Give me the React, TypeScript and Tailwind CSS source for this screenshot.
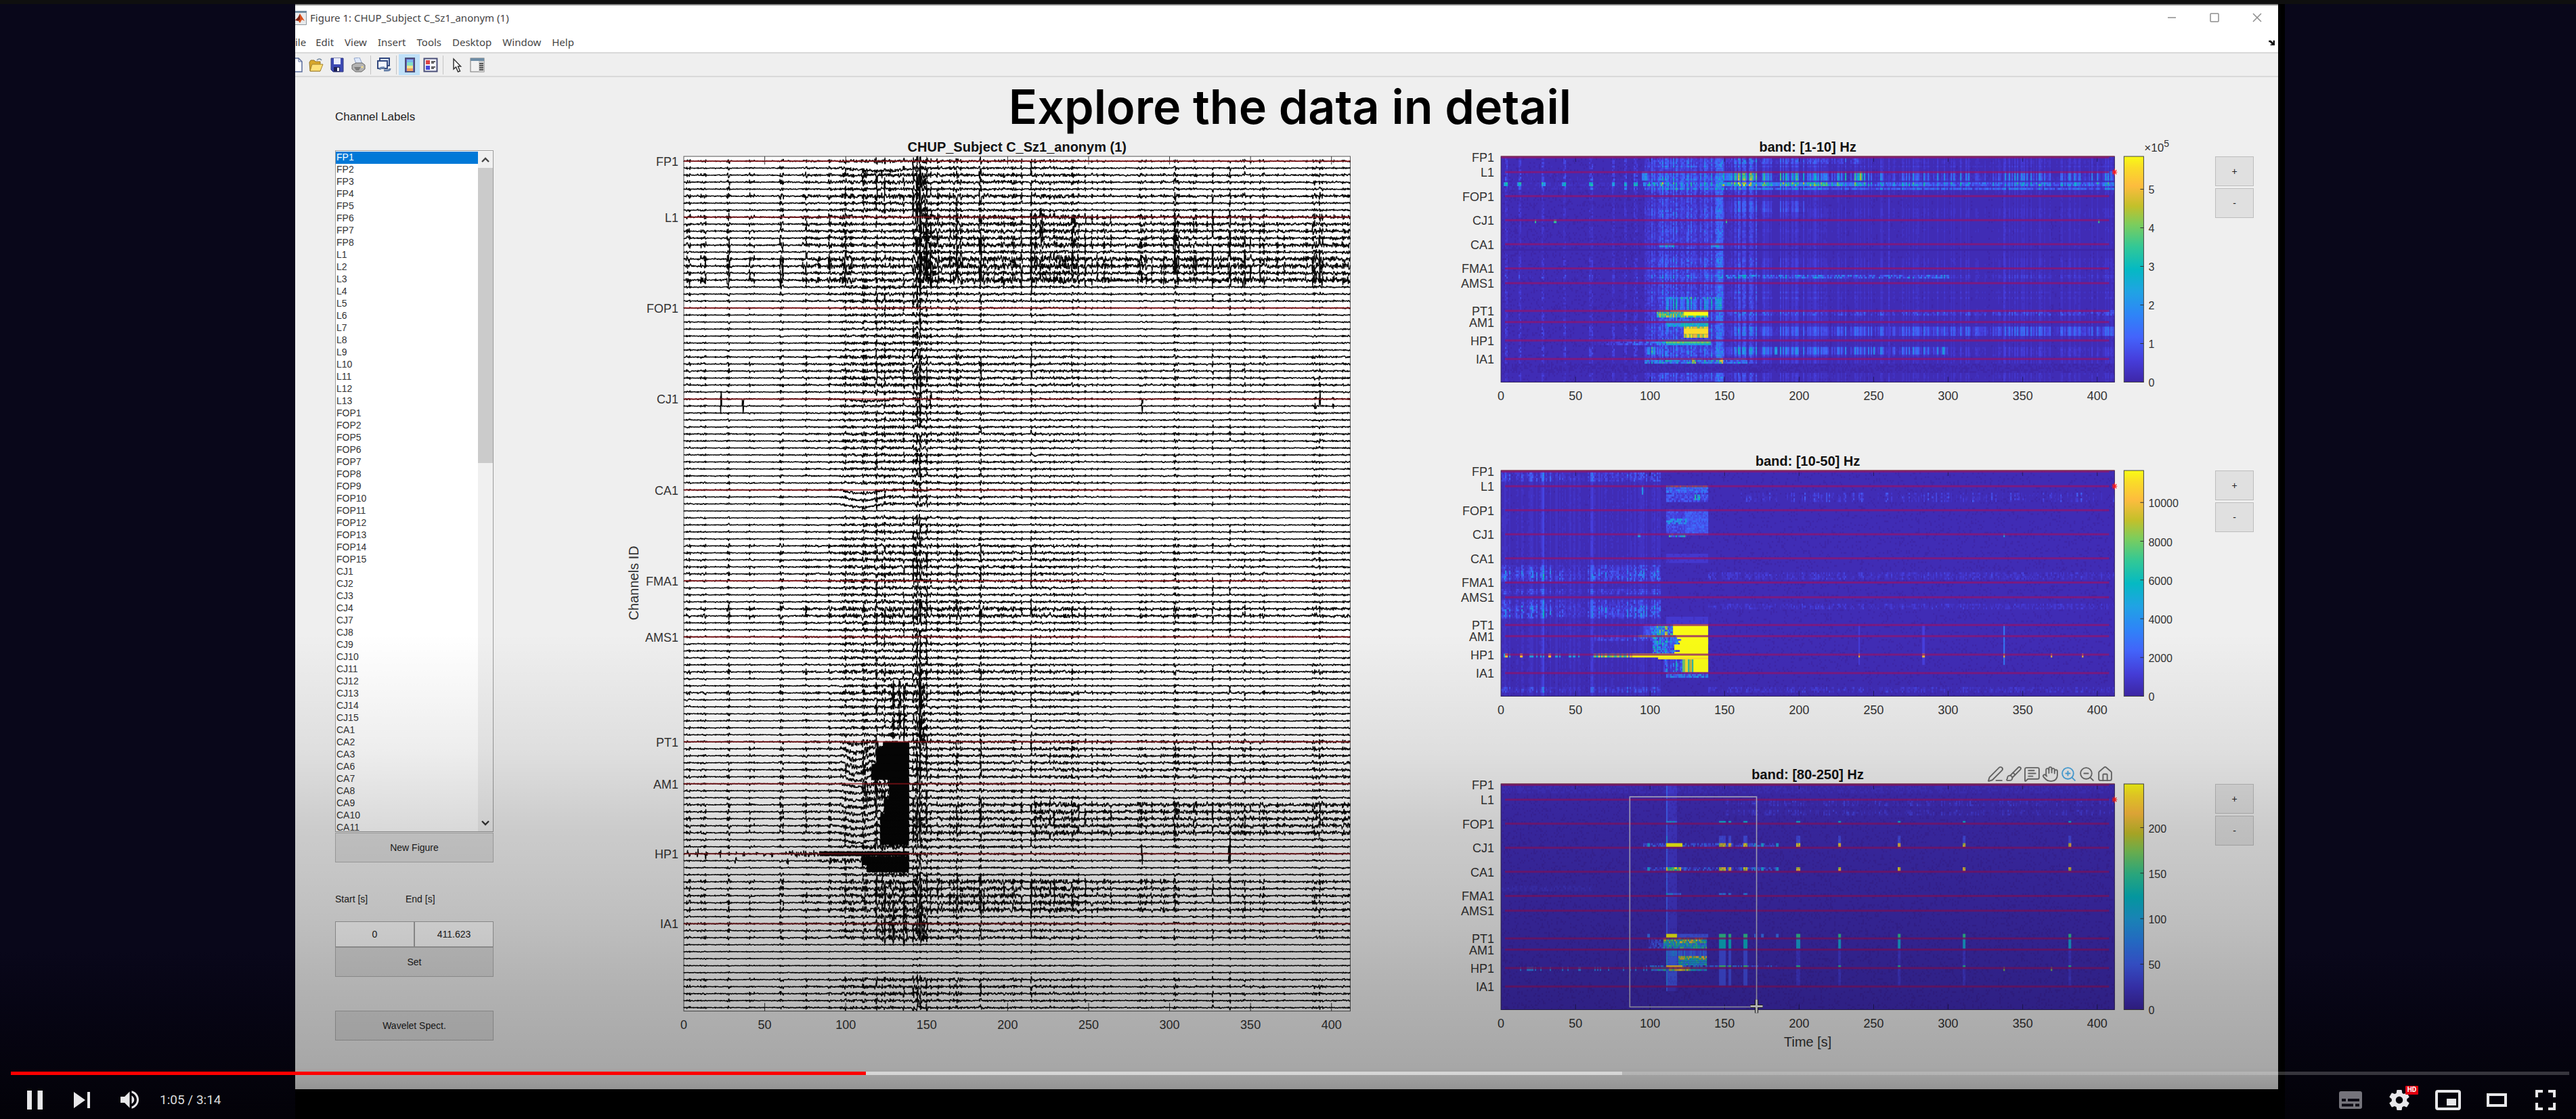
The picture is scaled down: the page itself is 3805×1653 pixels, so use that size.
import { useMemo, type ReactNode } from "react";
import { Brush, Hand, House, MessageSquareText, PenLine, ZoomIn, ZoomOut } from "lucide-react";

const CHANNELS = 122;
const DURATION = 411.6;

const MARKERS: [string, number][] = [
  ["FP1", 0], ["L1", 8], ["FOP1", 21], ["CJ1", 34], ["CA1", 47], ["FMA1", 60],
  ["AMS1", 68], ["PT1", 83], ["AM1", 89], ["HP1", 99], ["IA1", 109],
];

const LIST = (
  "FP1 FP2 FP3 FP4 FP5 FP6 FP7 FP8 L1 L2 L3 L4 L5 L6 L7 L8 L9 L10 L11 L12 L13 " +
  "FOP1 FOP2 FOP5 FOP6 FOP7 FOP8 FOP9 FOP10 FOP11 FOP12 FOP13 FOP14 FOP15 " +
  "CJ1 CJ2 CJ3 CJ4 CJ7 CJ8 CJ9 CJ10 CJ11 CJ12 CJ13 CJ14 CJ15 " +
  "CA1 CA2 CA3 CA6 CA7 CA8 CA9 CA10 CA11"
).split(" ");

const TIME_TICKS = [0, 50, 100, 150, 200, 250, 300, 350, 400];

/* Repeatable noise in 0..1 */
function noise(a: number, b: number) {
  const s = Math.sin(a * 127.1 + b * 311.7 + 13.7) * 43758.5453;
  return s - Math.floor(s);
}
const within = (v: number, lo: number, hi: number) => v >= lo && v <= hi;
const near = (t: number, list: number[], w: number) => list.some((x) => Math.abs(t - x) <= w);

/* ---------- multichannel traces ---------- */

const EARLY = [3, 12, 28, 42, 60, 75, 83, 90];
const LATE = [183, 215, 222, 240, 260, 282, 303, 327, 337, 346, 358, 390, 393, 401];

function gain(ch: number) {
  if (ch === 50) return 0;
  if (ch === 2 || ch === 3) return 0.8;
  if (ch === 5) return 1;
  if (ch < 8) return 0.55;
  if (within(ch, 8, 11)) return 1;
  if (ch === 12) return 1.3;
  if (ch === 13) return 0.7;
  if (within(ch, 14, 17)) return ch === 16 ? 1.1 : 1.7;
  if (within(ch, 18, 20)) return 0.5;
  if (within(ch, 21, 27)) return 0.35;
  if (within(ch, 28, 32)) return 0.6;
  if (ch === 39 || ch === 40) return 0.5;
  if (within(ch, 34, 46)) return 0.38;
  if (within(ch, 47, 54)) return 0.35;
  if (within(ch, 55, 60)) return 0.6;
  if (ch === 64 || ch === 65) return 1;
  if (within(ch, 61, 67)) return 0.5;
  if (ch === 73 || ch === 76) return 0.75;
  if (within(ch, 68, 82)) return 0.42;
  if (within(ch, 83, 88)) return 0.6;
  if (within(ch, 92, 96)) return 0.8;
  if (within(ch, 89, 98)) return 0.5;
  if (within(ch, 99, 101)) return 0.4;
  if (within(ch, 103, 107)) return 0.85;
  if (within(ch, 109, 111)) return 0.6;
  if (within(ch, 112, 116)) return 0.18;
  if (within(ch, 117, 119)) return 0.55;
  return 0.4;
}

/* Values above SOLID describe saturated blocks; the excess is the half height. */
const SOLID = 40;

function amplitude(ch: number, t: number) {
  const g = gain(ch);
  const left = within(ch, 8, 17);
  let a = 0.8 + g;
  if (near(t, EARLY, 1.6)) a += g * 4.5;
  if (t > 72 && t < 96) a += g * 1.6;
  if (t >= 96 && t < 106) a += 2 + g * 7;
  else if (t >= 106 && t < 116) a += 1.5 + g * 4.5;
  else if (t >= 116 && t < 143) a += 2 + g * 5.5;
  else if (t >= 143 && t < 152) a += 3 + g * 6;
  else if (t >= 152 && t < 170) a += 1 + g * 5;
  else if (t >= 170 && t < 210) a += g * 4.6;
  else if (t >= 210 && t < 250) a += g * (left ? 4.2 : 3);
  else if (t >= 250) a += g * (left ? 3.2 : 1.8);
  if (ch === 50 || within(ch, 112, 116)) a = Math.min(a, 2);
  if (left && t > 104 && t < 143) a *= 0.55;
  if (left && t > 148 && t < 156) a += 6;
  if (near(t, LATE, 0.7)) a += g * 5;
  if (within(ch, 92, 96) && t > 215) a += 2.6;
  if (within(ch, 83, 88) && t > 225) a += 1;
  if (within(ch, 103, 107) && t > 152 && t < 300) a += 2;
  if (within(ch, 8, 11) && near(t, [221, 241], 1)) a += 9;
  if (ch === 34 || ch === 35) {
    if (near(t, [23, 36.5], 0.4)) a += 24;
    if (near(t, [283, 390, 393, 401], 0.5)) a += 10;
    if (near(t, [146, 152], 1)) a += 8;
  }
  if (within(ch, 75, 83) && (near(t, [129, 133, 137], 1.2) || near(t, [147], 1.8))) a += 11;
  if (within(ch, 107, 111) && (near(t, [129, 137], 1) || near(t, [147], 2))) a += 11;
  if (within(ch, 2, 7) && near(t, [145, 148], 1.5)) a += 6;
  if (ch >= 83 && ch < 88 && t > 100 && t < 120) a += 3;
  if (within(ch, 89, 91) && t > 110 && t < 128) a += 6;
  if (ch === 98 && t > 115 && t < 139) a += 5;
  if (within(ch, 102, 111) && t > 120 && t < 139) a += 4;
  if (ch === 99) {
    if (near(t, [3, 8, 14, 22, 32, 37, 45, 50, 54], 0.8)) a += 8;
    if (t > 62 && t < 80) a += 12 * noise(7, Math.floor(t * 2));
    if (t >= 80 && t < 139) a += 7;
    if (near(t, [283, 337], 0.5)) a += 22;
  }
  if (ch === 100) {
    if (t > 84 && t < 112) a += 5;
    if (near(t, [32, 64, 337], 0.5)) a += 14;
  }
  if (t >= 139) return a;
  if (within(ch, 83, 84) && t > 123) return SOLID + 10;
  if (within(ch, 85, 86) && t > 119) return SOLID + 11;
  if (within(ch, 87, 88) && t > 116) return SOLID + 8;
  if (within(ch, 89, 91) && t > 127) return SOLID + 10;
  if (within(ch, 92, 93) && t > 124) return SOLID + 11;
  if (within(ch, 94, 97) && t > 121.5) return SOLID + 9;
  if (ch === 99 && t > 84) return SOLID + 4;
  if (ch === 100 && t > 110) return SOLID + 8;
  if (ch === 101 && t > 113) return SOLID + 8;
  return a;
}

function drift(ch: number, t: number) {
  if (t < 97 || t > 145) return 0;
  const u = (t - 97) / 48;
  if (within(ch, 47, 49)) return 5 * Math.sin(Math.min(1, u * 1.8) * Math.PI);
  if (ch === 34) return 3 * Math.sin(Math.min(1, u * 1.4) * Math.PI);
  if (ch === 1) return 4 * Math.sin(u * Math.PI);
  if (ch === 83) return 3 * Math.sin(Math.min(1, u * 2.6) * Math.PI) + (t > 120 && t < 139 ? 9 : 0);
  if (within(ch, 84, 88)) return 8 * Math.sin(Math.min(1, u * 2.6) * Math.PI) - 2;
  if (within(ch, 89, 97)) return 4 * Math.sin(Math.min(1, u * 2.2) * Math.PI);
  return 0;
}

const EEG = { left: 91, top: 31, width: 984, height: 1262, first: 7, step: 10.33 };

function tracePath(ch: number) {
  const base = EEG.top + EEG.first + ch * EEG.step;
  let d = "";
  for (let i = 0; i <= EEG.width * 2; i++) {
    const x = i / 2;
    const t = (x / EEG.width) * DURATION;
    const a = amplitude(ch, t);
    let y: number;
    if (a >= SOLID) {
      y = (i % 2 ? 1 : -1) * (a - SOLID) * (0.75 + 0.25 * noise(ch, i));
    } else {
      const c = noise(3, Math.floor(x / 2));
      const shared = 0.35 + 1.1 * c * c * c;
      y = (noise(ch + 1, i) - 0.5) * a * 1.6 * shared;
    }
    y += drift(ch, t);
    d += (i ? "L" : "M") + (EEG.left + x) + " " + Math.max(EEG.top, Math.min(EEG.top + EEG.height, base + y)).toFixed(1);
  }
  return d;
}

function TracePlot() {
  const traces = useMemo(() => Array.from({ length: CHANNELS }, (_, i) => tracePath(i)), []);
  const { left, top, width, height, first, step } = EEG;
  const tx = (t: number) => left + (t / DURATION) * width;
  return (
    <svg viewBox="0 0 1090 1340" className="block h-auto w-full" role="img" aria-label="Channel traces over time">
      <rect x={left} y={top} width={width} height={height} fill="#fff" stroke="#555" />
      {TIME_TICKS.slice(1).map((t) => (
        <path key={t} d={`M${tx(t)} ${top}v12M${tx(t)} ${top + height}v-12`} stroke="#333" />
      ))}
      {traces.map((d, i) => (
        <path key={i} d={d} fill="none" stroke="#050505" strokeWidth="1.4" strokeLinejoin="bevel" />
      ))}
      {MARKERS.map(([name, ch]) => (
        <path key={name} d={`M${left} ${top + first + ch * step}h${width}`} stroke="#a0161c" strokeWidth="2" opacity="0.7" />
      ))}
      <g fontFamily='"Liberation Sans", Arial, sans-serif' fill="#333">
        <text x={left + width / 2} y="24" fontSize="20" fontWeight="700" textAnchor="middle" fill="#111">
          CHUP_Subject C_Sz1_anonym (1)
        </text>
        {MARKERS.map(([name, ch]) => (
          <text key={name} x={left - 8} y={top + first + ch * step + 7} fontSize="18" textAnchor="end">{name}</text>
        ))}
        {TIME_TICKS.map((t) => (
          <text key={t} x={tx(t)} y="1319" fontSize="18" textAnchor="middle">{t}</text>
        ))}
        <text transform="translate(24 661) rotate(-90)" fontSize="20" textAnchor="middle">Channels ID</text>
      </g>
    </svg>
  );
}

/* ---------- heat maps ---------- */

const STOPS: [number, number, number, number][] = [
  [0, 62, 38, 168], [0.1, 70, 62, 220], [0.2, 67, 100, 252], [0.3, 46, 133, 247], [0.4, 32, 163, 228],
  [0.5, 5, 185, 195], [0.6, 50, 200, 150], [0.7, 125, 205, 92], [0.78, 195, 192, 42], [0.87, 253, 188, 62],
  [0.95, 250, 220, 40], [1, 249, 251, 21],
];

function parula(v: number) {
  let i = 1;
  while (i < STOPS.length - 1 && STOPS[i][0] < v) i++;
  const a = STOPS[i - 1];
  const b = STOPS[i];
  const k = Math.max(0, Math.min(1, (v - a[0]) / (b[0] - a[0])));
  const mix = (n: 1 | 2 | 3) => Math.round(a[n] + (b[n] - a[n]) * k);
  return `rgb(${mix(1)} ${mix(2)} ${mix(3)})`;
}

type Field = (ch: number, t: number, cell: number, col: number) => number;

const lowBand: Field = (ch, t, n, c) => {
  const g = gain(ch);
  const flat = ch === 50 || within(ch, 112, 116);
  let v = 0.01 + 0.03 * n * g;
  if (flat) return v;
  if (near(t, EARLY, 1)) v += g * 0.14 * n;
  if (t >= 96 && t < 144) v += (0.08 + g * 0.18) * (0.25 + 1.1 * c * c) * (0.4 + n * 0.8);
  else if (t >= 144 && t < 149) v += 0.13 + (0.1 + g * 0.15) * n;
  else if (t >= 149 && t < 172) v += (0.08 + g * 0.25) * c * c * (0.5 + n * 0.6);
  else if (t >= 172 && t < 215) v += g * 0.2 * c * c;
  else if (t >= 215) v += g * 0.1 * c * c;
  if (within(ch, 1, 3) && t > 150 && t < 240) v += 0.15 * c * n;
  if (within(ch, 8, 12)) {
    if (t > 94 && t < 98) v += 0.25;
    if (t > 149 && t < 172) v += 0.5 * c;
    else if (t >= 172 && t < 245) v += 0.5 * c * c * c;
    else if (t >= 245) v += 0.24 * c * c * c;
    if (near(t, [241], 1.2)) v += 0.4;
  }
  if (ch === 14 || ch === 15) {
    if (near(t, EARLY, 1.2)) v += 0.3;
    if (t > 95 && t < 109) v += 0.3 * n;
    if (t > 148 && t < 245) v += 0.15 + 0.5 * n * c;
    else if (t >= 245) v += 0.04 + 0.4 * n * c;
  }
  if (ch === 17 && t > 150) v += 0.2 * n;
  if (within(ch, 24, 29) && t > 150 && t < 205) v += 0.12 * c * c;
  if (within(ch, 64, 65) && t > 150 && t < 300) v += 0.3 * n * n;
  if (within(ch, 47, 48) && t > 106 && t < 116) v += 0.25 * n + 0.1;
  if (within(ch, 47, 48) && near(t, [143], 2.5)) v += 0.25;
  if (within(ch, 34, 35) && near(t, [22.5, 36, 151, 401], 0.6)) v = 0.6;
  if (within(ch, 76, 82) && t > 110 && t < 148) v += ch === 76 ? 0.35 * n : 0.3 * c * c;
  if (within(ch, 83, 86)) {
    if (t > 104 && t < 139) v += 0.3 + 0.3 * n;
    if (ch < 86 && t > (ch < 84 ? 113 : 122) && t < 139) v = 1;
  }
  if (within(ch, 87, 88) && t > 107 && t < 139) v += 0.15 * n;
  if (within(ch, 89, 91) && t > 110 && t < 139) v = (t > 120 ? 0.35 : 0.25) + 0.25 * n;
  if (within(ch, 92, 97) && t > 122.5 && t < 139) v = within(ch, 93, 95) ? 0.95 : 0.6 + 0.4 * c;
  if (within(ch, 92, 96) && t > 155) v += (t > 225 ? 0.17 : 0.1) * c;
  if (within(ch, 83, 85) && t > 150) v += 0.2 * c * n;
  if (within(ch, 99, 101)) {
    if (t > 110 && t < 140) v = (ch === 100 ? 0.6 : 0.35) + 0.15 * n;
    else if (t > 60 && t < 111) v += ((t - 60) / 50) * 0.35 * n;
  }
  if (within(ch, 103, 106)) {
    if (t > 97 && t < 105) v += 0.4 * c;
    if (t > 150 && t < 300) v += 0.25 * c * c;
    if (near(t, [184, 250, 296], 0.7)) v += 0.35;
  }
  if (within(ch, 109, 111) && t > 96 && t < 165) v += 0.3 * n;
  if (within(ch, 109, 111) && near(t, [129, 147], 1.5)) v += 0.4;
  if (near(t, [260, 337], 0.5)) v += 0.07;
  return v;
};

const midBand: Field = (ch, t, n, c) => {
  let v = 0.01 + 0.02 * n;
  if (t > 139 && (within(ch, 55, 58) || within(ch, 72, 74) || within(ch, 117, 119))) v += 0.11 * c * n;
  if (t < 107) {
    v += 0.04 * c * c;
    const strong = within(ch, 54, 58) || within(ch, 73, 78);
    const busy = within(ch, 1, 5) || within(ch, 51, 59) || within(ch, 64, 66) || within(ch, 70, 79) || within(ch, 117, 119);
    const phase = t < 24 || (t > 26 && t < 34) || (t > 38 && t < 42) || t > 58 ? 1 : 0.3;
    if (busy) v += (strong ? 0.32 : 0.17) * n * (0.15 + c * c) * phase;
    if (near(t, [28, 60], 0.9)) v += 0.07 + (busy ? 0.1 : 0);
  }
  if (t < 139 && t > 110) {
    if (within(ch, 8, 11)) v += ch === 8 ? 0.35 + 0.5 * n : 0.18 * n + 0.1;
    if (within(ch, 12, 16)) v += 0.16 * n + 0.03;
    if (within(ch, 21, 34)) v += (t > 123 ? 0.11 : 0.06) + 0.1 * n;
    if (within(ch, 26, 28) && t < 124) v += 0.25 * n;
    if (within(ch, 34, 35) && t > 112 && t < 124) v += 0.6 * n;
    if (within(ch, 109, 111)) v += 0.3 * (0.2 + n);
    if (within(ch, 45, 49) || within(ch, 79, 82)) v += 0.05;
  }
  if (within(ch, 13, 15) && near(t, [130, 132], 0.7)) v = 0.3 + 0.4 * n;
  if (within(ch, 8, 12) && near(t, [94.5], 0.8)) v = 0.38;
  if (within(ch, 34, 35) && near(t, [92, 337], 0.8)) v = 0.4;
  if (ch > 11 && ch < 17 && t > 160) v += 0.2 * c * c * c * c * n;
  if (within(ch, 83, 88)) {
    if (t > 115 && t < 139) v = 1;
    else if (t > 95 && t <= 115) v = 0.1 + ((t - 95) / 20) * 0.9 * n * (0.4 + c);
  }
  if (within(ch, 89, 98)) {
    const start = 115 + 6 * noise(5, ch);
    if (t > start && t < 139) v = 1;
    else if (t > 101 && t <= start) v = 0.05 + 0.6 * n * (0.3 + 0.7 * c);
    if (ch === 89 && t > 91 && t <= start) v = 0.9 * (0.4 + 0.6 * n);
    else if (ch < 92 && t > 62 && t < 101) v += 0.2 * n * c;
  }
  if (within(ch, 99, 100)) {
    if (t > 88 && t < 139) v = 1;
    else if (t > 62 && t <= 88) v = 0.3 + 0.7 * c;
    else if (near(t, [3, 13.5, 32], 0.8)) v = 0.9;
    else if (t < 62 && c > 0.75) v = 0.4;
    if (near(t, [240, 283, 337, 369, 390], 0.6)) v = 0.85;
  }
  if (ch === 101 && t > 105 && t < 139) v = 0.95;
  if (within(ch, 102, 108)) {
    if (t > 129 && t < 139) v = 1;
    else if (t > 121 && t <= 129) v = 0.5 + 0.5 * c;
    else if (t > 109 && t <= 121) v = 0.05 + 0.5 * n * c;
  }
  if (within(ch, 83, 104) && ch !== 99 && ch !== 100) {
    if (near(t, [240, 283], 0.5)) v += 0.08;
    if (near(t, [337], 0.6)) v += 0.25;
  }
  return v;
};

const SPOTS = [148, 153, 163.5, 199, 227, 267, 310, 381];
const MINOR_SPOTS = [98.5, 170, 175, 185];
const highBand: Field = (ch, t, n, c) => {
  let v = 0.01 + 0.015 * n;
  if (within(ch, 1, 4)) v += 0.02;
  if (t > 150 && (within(ch, 8, 11) || within(ch, 14, 16))) v += 0.12 * c * c * n;
  if (t < 60 && within(ch, 55, 57)) v += 0.04 * n;
  if (t >= 110 && t <= 118 && ch < 112) v += 0.05;
  if (near(t, [111], 0.7) && ch < 112) v += 0.14;
  const wide = t > 146 && t < 150;
  const spot = near(t, SPOTS, 1) || wide;
  const minor = near(t, MINOR_SPOTS, 0.8);
  const core = within(ch, 32, 33);
  const second = within(ch, 45, 46);
  if (core || second) {
    if (t > 110 && t < (core ? 121 : 120)) v = core ? 1 : 0.45 + 0.55 * n;
    else if (spot) v = 0.7 + 0.3 * n;
    else if (minor) v = 0.4;
    else if (t > 95 && t < 185) v += 0.25 * n * n;
  }
  if (ch === 20) {
    if (t > 110 && t < 118) v += 0.3 * n + 0.1;
    if (spot) v = 0.45;
  }
  if (within(ch, 28, 31) && (spot || near(t, [111], 0.7))) v += 0.12;
  if (ch === 59 && ((spot && t < 166) || (t > 110 && t < 120))) v += 0.25 * n + 0.1;
  if (within(ch, 81, 82)) {
    if (t > 110 && t < 118) v = 1;
    else if (t < 139 && t >= 118) v += 0.15;
    else if (spot) v = 0.6;
    else if (minor) v = 0.25;
  }
  if (within(ch, 83, 88)) {
    if (t > 109 && t < 138) v = ch < 86 ? 0.3 + 0.7 * n : 0.15 + 0.5 * n;
    else if (t > 99 && t < 110) v += 0.2 * n;
    else if (spot) v = 0.35;
  }
  if (within(ch, 89, 92) && t > 110 && t < 138) v += 0.18 * c + 0.1;
  if (within(ch, 93, 97)) {
    if (t > 119 && t < 138) v = ch < 95 ? 0.4 + 0.5 * n : 0.25 + 0.35 * n;
    else if (t > 110 && t < 119) v += 0.14;
  }
  if (ch === 98) {
    if (t > 110 && t < 121) v = 0.9;
    else if (spot) v = 0.5;
    else if (t > 97 && t < 185) v += 0.35 * n * n;
  }
  if (within(ch, 99, 100)) {
    if (t > 112 && t < 127) v = 0.55 + 0.45 * n;
    else if (t > 100 && t < 138) v = 0.1 + 0.5 * n;
    else if (t < 100 && c > 0.75) v += 0.3;
    if (near(t, [337, 369], 0.6)) v = 0.7;
  }
  if (within(ch, 83, 108) && spot) v += t < 170 ? 0.13 : 0.07;
  if (within(ch, 101, 108) && t > 110 && t < 118) v += 0.1;
  return v;
};

const HEAT = { left: 69, top: 31, width: 905, height: 333, cols: 453 };
const LEVELS = 40;

function heatPaths(field: Field, seed: number) {
  const cw = HEAT.width / HEAT.cols;
  const rh = HEAT.height / CHANNELS;
  const out: string[] = Array(LEVELS + 1).fill("");
  for (let r = 0; r < CHANNELS; r++) {
    let start = 0;
    let prev = -1;
    for (let c = 0; c <= HEAT.cols; c++) {
      const level =
        c === HEAT.cols
          ? -2
          : Math.round(
              Math.max(0, Math.min(1, field(r, (c / HEAT.cols) * DURATION, noise(r + seed, c), noise(seed, c)))) * LEVELS,
            );
      if (level !== prev) {
        if (prev > 0) {
          out[prev] += `M${(HEAT.left + start * cw).toFixed(1)} ${(HEAT.top + r * rh).toFixed(2)}h${((c - start) * cw).toFixed(1)}v2.9h-${((c - start) * cw).toFixed(1)}z`;
        }
        start = c;
        prev = level;
      }
    }
  }
  return out;
}

interface BandProps {
  id: string;
  title: string;
  field: Field;
  seed: number;
  scale: { max: number; ticks: number[] };
  exponent?: boolean;
  timeLabel?: boolean;
  selection?: boolean;
}

function BandPlot({ id, title, field, seed, scale, exponent, timeLabel, selection }: BandProps) {
  const cells = useMemo(() => heatPaths(field, seed), [field, seed]);
  const { left, top, width, height } = HEAT;
  const bottom = top + height;
  const tx = (t: number) => left + (t / DURATION) * width;
  const cy = (ch: number) => top + ((ch + 0.5) * height) / CHANNELS;
  const sy = (v: number) => bottom - (v / scale.max) * height;
  return (
    <svg viewBox={timeLabel ? "0 0 1110 430" : "0 0 1110 400"} className="block h-auto w-full" role="img" aria-label={title}>
      <defs>
        <linearGradient id={id} x1="0" y1="1" x2="0" y2="0">
          {STOPS.map(([o]) => (
            <stop key={o} offset={o} stopColor={parula(o)} />
          ))}
        </linearGradient>
      </defs>
      <rect x={left} y={top} width={width} height={height} fill={parula(0)} />
      {cells.map((d, i) => (d ? <path key={i} d={d} fill={parula(i / LEVELS)} /> : null))}
      {TIME_TICKS.slice(1).map((t) => (
        <path key={t} d={`M${tx(t)} ${top}v8M${tx(t)} ${bottom}v-8`} stroke="#241a60" />
      ))}
      {MARKERS.map(([name, ch]) => (
        <path key={name} d={`M${left + (ch ? 6 : 0)} ${cy(ch)}H${left + width - 8}`} stroke="#8f1470" strokeWidth="3" opacity="0.75" />
      ))}
      <rect x={left} y={top} width={width} height={height} fill="none" stroke="#33275f" />
      <path d={`M${left} ${top}h${width}`} stroke="#a0324a" />
      <path
        d={`M${left + width - 4} ${cy(8)}h8m-4 -5v10m-3 -8l6 6m0 -6l-6 6`}
        stroke="#ff1a1a"
        strokeWidth="1.2"
        fill="none"
      />
      <rect x="988" y={top} width="29" height={height} fill={`url(#${id})`} stroke="#444" />
      <g fontFamily='"Liberation Sans", Arial, sans-serif' fill="#333" fontSize="18">
        <text x={left + width / 2} y="24" fontSize="20" fontWeight="700" textAnchor="middle" fill="#111">{title}</text>
        {MARKERS.map(([name, ch]) => (
          <text key={name} x={left - 10} y={cy(ch) + 7} textAnchor="end">{name}</text>
        ))}
        {TIME_TICKS.map((t) => (
          <text key={t} x={tx(t)} y="390" textAnchor="middle">{t}</text>
        ))}
        {scale.ticks.map((v) => (
          <g key={v}>
            <path d={`M1017 ${sy(v)}h-5`} stroke="#333" />
            <text x="1024" y={sy(v) + 7} fontSize="16">{v}</text>
          </g>
        ))}
        {exponent && (
          <text x="1018" y="24" fontSize="17">
            ×10<tspan dy="-7" fontSize="14">5</tspan>
          </text>
        )}
        {timeLabel && (
          <text x={left + width / 2} y="418" fontSize="20" textAnchor="middle">Time [s]</text>
        )}
      </g>
      {selection && (
        <g fill="none">
          <rect x="259" y="50" width="187" height="310" stroke="#b9b6cf" strokeWidth="1.6" />
          <path d="M446 349v20M437 359h18" stroke="#222" strokeWidth="5" />
          <path d="M446 349v20M437 359h18" stroke="#eee" strokeWidth="3" />
        </g>
      )}
    </svg>
  );
}

function ScaleButtons({ name }: { name: string }) {
  const cls = "h-11 w-full border border-[#bdbdbd] bg-[#e0e0e0] text-sm text-[#222]";
  return (
    <div className="flex w-[57px] shrink-0 flex-col gap-[3px] pt-[31px]">
      <button className={cls} aria-label={`Increase scale, ${name}`}>+</button>
      <button className={cls} aria-label={`Decrease scale, ${name}`}>-</button>
    </div>
  );
}

/* ---------- side panel ---------- */

function SidePanel() {
  const button = "block h-11 w-full border border-[#b4b4b4] bg-[#dfdfdf] text-sm text-[#222]";
  const input = "h-[38px] w-1/2 border border-[#a9a9a9] bg-white text-center text-sm text-[#222]";
  return (
    <section className="w-[234px] shrink-0 pt-[47px] text-sm text-[#222]">
      <label htmlFor="channels" className="block text-[17px] leading-6">Channel Labels</label>
      <div className="mt-[37px] flex h-[1007px] border border-[#9b9b9b] bg-white pt-px">
        <select
          id="channels"
          size={56}
          defaultValue="FP1"
          className="h-full min-w-0 flex-1 appearance-none overflow-hidden bg-white text-sm outline-none"
        >
          {LIST.map((c) => (
            <option
              key={c}
              value={c}
              className="h-[18px] min-h-0 px-px py-0 leading-[19px] [-webkit-text-fill-color:#333] checked:bg-[linear-gradient(#0078d7,#0078d7)] checked:[-webkit-text-fill-color:#fff]"
            >
              {c}
            </option>
          ))}
        </select>
        <div className="flex w-[22px] flex-col bg-[#f0f0f0]">
          <button aria-label="Scroll up" className="flex h-6 items-center justify-center">
            <svg viewBox="0 0 12 8" className="h-2 w-3" fill="none" stroke="#444" strokeWidth="2.4"><path d="M1 7l5-5 5 5" /></svg>
          </button>
          <div className="h-[436px] bg-[#cbcbcb]" />
          <button aria-label="Scroll down" className="mt-auto flex h-6 items-center justify-center">
            <svg viewBox="0 0 12 8" className="h-2 w-3" fill="none" stroke="#333" strokeWidth="2.4"><path d="M1 1l5 5 5-5" /></svg>
          </button>
        </div>
      </div>
      <button className={`${button} mt-px`}>New Figure</button>
      <div className="mt-11 flex h-5 items-center">
        <label htmlFor="start" className="w-[104px]">Start [s]</label>
        <label htmlFor="end">End [s]</label>
      </div>
      <div className="mt-[23px] flex">
        <input id="start" defaultValue="0" className={input} />
        <input id="end" defaultValue="411.623" className={input} />
      </div>
      <button className={button}>Set</button>
      <button className={`${button} mt-[50px]`}>Wavelet Spect.</button>
    </section>
  );
}

/* ---------- window chrome ---------- */

function ToolIcon({ label, active, children }: { label: string; active?: boolean; children: ReactNode }) {
  return (
    <button aria-label={label} className={active ? "flex h-[31px] w-[31px] items-center justify-center bg-[#bfe0f8]" : "flex h-[31px] w-[31px] items-center justify-center"}>
      <svg viewBox="0 0 22 22" className="size-[22px]">{children}</svg>
    </button>
  );
}

function Separator() {
  return <span className="mx-[3px] h-7 w-px bg-[#c4c4c4]" />;
}

function WindowChrome() {
  return (
    <header className="bg-white font-['Noto_Sans'] text-[#444]">
      <div className="flex h-[42px] items-center justify-between border-t-2 border-[#8a8a8a] pb-1">
        <div className="flex items-center gap-[5px]">
          <svg viewBox="0 0 17 21" className="h-[21px] w-[17px]">
            <path d="M0 .5h16.500v20H0" fill="#e8eaec" stroke="#8e979d" />
            <path d="M0 0h17v3H0z" fill="#6f8ba0" />
            <path d="M0 14l4-4 3-6 7 11-4-2-3 5-3-4z" fill="#d9501c" />
            <path d="M0 14l4-4 3-5v8l-3 2z" fill="#7a2316" />
          </svg>
          <h1 className="text-[15px]">Figure 1: CHUP_Subject C_Sz1_anonym (1)</h1>
        </div>
        <div className="mr-6 flex items-center gap-[49px] text-[#8d8d8d]">
          <button aria-label="Minimize"><svg viewBox="0 0 14 14" className="size-3.5" stroke="currentColor" strokeWidth="1.5"><path d="M1 7h12" /></svg></button>
          <button aria-label="Maximize"><svg viewBox="0 0 14 14" className="size-3.5" fill="none" stroke="currentColor" strokeWidth="1.5"><rect x="1" y="1" width="12" height="12" rx="1" /></svg></button>
          <button aria-label="Close"><svg viewBox="0 0 14 14" className="size-3.5" stroke="currentColor" strokeWidth="1.5"><path d="M1 1l12 12M13 1L1 13" /></svg></button>
        </div>
      </div>
      <nav className="flex h-[29px] items-center gap-4 overflow-hidden text-[15px]">
        <button className="-mr-0.5">ile</button>
        {["Edit", "View", "Insert", "Tools", "Desktop", "Window", "Help"].map((m) => (
          <button key={m}>{m}</button>
        ))}
        <svg viewBox="0 0 12 10" className="mr-1 ml-auto h-2 w-2.5"><path d="M0 1h4l4 4V1l3 0v9H3V8h3L2 4H0z" fill="#111" /></svg>
      </nav>
      <div className="flex h-[37px] items-center border-y-2 border-[#d9d9d9] bg-[#efefef]">
        <svg viewBox="0 0 11 22" className="mr-1 h-[22px] w-[11px]"><path d="M0 1h5l5 5v15H0" fill="#fdfdff" stroke="#5a6c9c" strokeWidth="1.5" /><path d="M5 1v5h5" fill="none" stroke="#5a6c9c" /></svg>
        <ToolIcon label="Open">
          <path d="M1 7l2-3h5l2 2h7v14H2z" fill="#d8a72c" stroke="#94762a" /><path d="M2 20l3-10h16l-4 10z" fill="#ffe27a" stroke="#a3822f" /><path d="M12 4q4-4 7 0" fill="none" stroke="#7b8fa6" strokeWidth="1.6" />
        </ToolIcon>
        <ToolIcon label="Save">
          <path d="M2 1h18v20H5l-3-3z" fill="#3d4ab4" stroke="#2c357f" /><path d="M6 1h10v9H6z" fill="#e9ecfb" /><path d="M6 14h9v7H6z" fill="#1e2257" /><path d="M11 15h3v5h-3z" fill="#fff" />
        </ToolIcon>
        <ToolIcon label="Print">
          <path d="M5 1l8-1 4 9H8z" fill="#dfe9fb" stroke="#8ea2c8" /><path d="M2 11l6-3h9l4 3v6l-5 4H7l-5-4z" fill="#b4b4b4" stroke="#666" /><path d="M5 14h10l-3 5H8z" fill="#7d7d7d" /><circle cx="17" cy="14" r="1.500" fill="#f6e08a" />
        </ToolIcon>
        <Separator />
        <ToolIcon label="Link plot">
          <rect x="5" y="1" width="14" height="11" fill="#dbe6fa" stroke="#33497f" strokeWidth="2" /><rect x="2" y="5" width="14" height="11" fill="#f2f6ff" stroke="#33497f" strokeWidth="2" /><path d="M5 18q0-3 4-3h3M11 19h5q4 0 4-3" fill="none" stroke="#6680a8" strokeWidth="3" />
        </ToolIcon>
        <Separator />
        <ToolIcon label="Insert colorbar" active>
          <rect x="5" y="1" width="13" height="20" fill="#6c5fc2" stroke="#4b4d78" strokeWidth="2" /><path d="M7 3h9v4H7z" fill="#78b8ec" /><path d="M7 7h9v5H7z" fill="#83dfc4" /><path d="M7 12h9v4H7z" fill="#efe58c" /><path d="M7 16h9v4H7z" fill="#f3a25f" />
        </ToolIcon>
        <ToolIcon label="Insert legend">
          <rect x="1.500" y="1.500" width="19" height="19" fill="#f6f7ff" stroke="#4a4f78" strokeWidth="2" /><path d="M4 4h6v6H4z" fill="#dc4545" /><path d="M4 12h6v6H4z" fill="#4549dc" /><path d="M12 6h6M12 8h4M12 14h6M12 16h4" stroke="#333" strokeWidth="1.300" />
        </ToolIcon>
        <Separator />
        <ToolIcon label="Edit plot">
          <path d="M7 2v15l3.500-3 3 7 3-1-3-7h4z" fill="#fff" stroke="#333" strokeWidth="1.500" />
        </ToolIcon>
        <ToolIcon label="Property inspector">
          <rect x="1" y="1" width="20" height="20" fill="#f2f2f2" stroke="#777" /><path d="M1 1h20v4H1z" fill="#6d8ca5" /><path d="M13 5h8v16h-8z" fill="#c9c9c9" /><path d="M14 9h6M14 12h6M14 15h6M14 18h6" stroke="#333" strokeWidth="1.300" />
        </ToolIcon>
      </div>
    </header>
  );
}

function AxesToolbar() {
  const icon = "size-[25px]";
  return (
    <div className="absolute top-1 right-[12.4%] flex gap-0.5 text-[#6b6b6b]">
      <button aria-label="Export"><PenLine className={icon} strokeWidth={1.8} /></button>
      <button aria-label="Brush data"><Brush className={icon} strokeWidth={1.8} /></button>
      <button aria-label="Data tips"><MessageSquareText className={icon} strokeWidth={1.8} /></button>
      <button aria-label="Pan"><Hand className={icon} strokeWidth={1.8} /></button>
      <button aria-label="Zoom in" className="text-[#4ba6e0]"><ZoomIn className={icon} strokeWidth={1.8} /></button>
      <button aria-label="Zoom out"><ZoomOut className={icon} strokeWidth={1.8} /></button>
      <button aria-label="Restore view"><House className={icon} strokeWidth={1.8} /></button>
    </div>
  );
}

/* ---------- player controls ---------- */

const GEAR =
  "m23.94 18.78c.03-.25.05-.51.05-.78 0-.27-.02-.52-.05-.78l1.68-1.32c.15-.12.19-.33.09-.51l-1.6-2.760c-.09-.17-.31-.24-.48-.17l-1.99.8c-.41-.32-.86-.58-1.35-.78l-.3-2.120c-.02-.19-.19-.33-.39-.33h-3.2c-.2 0-.36.14-.39.33l-.3 2.120c-.48.2-.93.47-1.35.78l-1.99-.8c-.18-.07-.39 0-.48.17l-1.6 2.760c-.1.17-.05.39.09.51l1.68 1.32c-.03.25-.05.52-.05.78s.02.52.05.78l-1.68 1.32c-.15.12-.19.33-.09.51l1.6 2.760c.09.17.31.24.48.17l1.99-.8c.41.32.86.58 1.35.78l.3 2.120c.02.19.19.33.39.33h3.200c.2 0 .36-.14.39-.33l.3-2.120c.48-.2.93-.47 1.35-.78l1.99.8c.18.07.39 0 .48-.17l1.600-2.760c.09-.17.05-.39-.09-.51zm-5.940 2.010c-1.540 0-2.800-1.250-2.800-2.800s1.250-2.800 2.800-2.800 2.800 1.250 2.800 2.800-1.250 2.800-2.800 2.800z";

function PlayerControls() {
  return (
    <footer className="absolute inset-x-0 bottom-0 h-[70px] px-4 pr-2.5 font-[Roboto] text-[#e8e8ea]">
      <div className="flex h-[5px] w-full bg-white/20" role="progressbar" aria-label="Playback" aria-valuemin={0} aria-valuemax={194} aria-valuenow={65}>
        <span className="w-[33.43%] bg-[#f00]" />
        <span className="w-[29.55%] bg-white/45" />
      </div>
      <div className="flex h-[57px] items-center justify-between pt-4 pr-5 pl-6">
        <div className="flex items-center">
          <button aria-label="Pause"><svg viewBox="0 0 23 28" className="h-7 w-[23px]" fill="currentColor"><path d="M0 0h7v28H0zM15.500 0h7.500v28h-7.500z" /></svg></button>
          <button aria-label="Next" className="ml-[46px]"><svg viewBox="0 0 24 24" className="size-6" fill="currentColor"><path d="M0 0v24l17-12zM20 0h4v24h-4z" /></svg></button>
          <button aria-label="Mute" className="ml-[45px]">
            <svg viewBox="8 9 18 18" className="size-[27px]" fill="currentColor"><path d="M8 21h4l5 5V10l-5 5H8zM19 14v8c1.480-.68 2.500-2.230 2.500-4s-1.020-3.260-2.500-4zM19 11.290c2.890.86 5 3.540 5 6.710s-2.110 5.850-5 6.710v2.060c4.010-.91 7-4.490 7-8.770s-2.990-7.860-7-8.770z" /></svg>
          </button>
          <span className="ml-[31px] text-[19px] leading-6 text-[#dcdcde]">1:05 / 3:14</span>
        </div>
        <div className="flex items-center">
          <button aria-label="Subtitles"><svg viewBox="0 0 34 26" className="h-[26px] w-[34px]"><rect width="34" height="26" rx="3" fill="#75747b" /><path d="M4 11h6v4H4zM13 11h17v4H13zM4 18.500h17v4H4zM24 18.500h6v4h-6z" fill="#0b0912" /></svg></button>
          <button aria-label="Settings" className="relative ml-10">
            <svg viewBox="10 10 16 16" className="size-[30px]" fill="currentColor"><path d={GEAR} /></svg>
            <span className="absolute -top-1.5 left-6 flex h-[13px] w-[19px] items-center justify-center rounded-[1px] bg-[#e1000f] text-[10px] leading-none font-bold text-white">HD</span>
          </button>
          <button aria-label="Miniplayer" className="ml-[38px]"><svg viewBox="0 0 38 30" className="h-[30px] w-[38px]"><rect x="2" y="2" width="34" height="26" rx="2" fill="none" stroke="currentColor" strokeWidth="4" /><path d="M17 13h14v10H17z" fill="currentColor" /></svg></button>
          <button aria-label="Theater mode" className="ml-[38px]"><svg viewBox="0 0 30 20" className="h-5 w-[30px]"><rect x="2" y="2" width="26" height="16" fill="none" stroke="currentColor" strokeWidth="4" /></svg></button>
          <button aria-label="Full screen" className="ml-[42px]"><svg viewBox="0 0 30 30" className="size-[30px]" fill="none" stroke="currentColor" strokeWidth="4"><path d="M2 11V2h9M19 2h9v9M28 19v9h-9M11 28H2v-9" /></svg></button>
        </div>
      </div>
    </footer>
  );
}

const LOW_SCALE = { max: 5.85, ticks: [0, 1, 2, 3, 4, 5] };
const MID_SCALE = { max: 11650, ticks: [0, 2000, 4000, 6000, 8000, 10000] };
const HIGH_SCALE = { max: 248, ticks: [0, 50, 100, 150, 200] };

export default function App() {
  return (
    <div className="flex min-h-screen flex-col bg-[#0f0f0f] pt-1.5 font-['Liberation_Sans',Arial,sans-serif]">
      <main className="relative flex flex-1 bg-linear-to-b from-[#09071a] from-85% to-[#030208]">
        <div className="w-[436px] shrink-0" />
        <div className="relative min-w-0 flex-1 bg-black pr-[10px] pb-[42px]">
          <div className="relative bg-[#efefef]">
            <WindowChrome />
            <div className="flex pr-9 pb-[51px] pl-[59px]">
              <SidePanel />
              <div className="ml-[190px] min-w-0 flex-[1090_1_0%] pt-[86px]">
                <TracePlot />
              </div>
              <div className="ml-[139px] flex min-w-0 flex-[1180_1_0%] flex-col gap-[63px] pt-[86px]">
                <div className="flex gap-3">
                  <div className="min-w-0 flex-1"><BandPlot id="scale-low" title="band: [1-10] Hz" field={lowBand} seed={11} scale={LOW_SCALE} exponent /></div>
                  <ScaleButtons name="1-10 Hz" />
                </div>
                <div className="flex gap-3">
                  <div className="min-w-0 flex-1"><BandPlot id="scale-mid" title="band: [10-50] Hz" field={midBand} seed={29} scale={MID_SCALE} /></div>
                  <ScaleButtons name="10-50 Hz" />
                </div>
                <div className="flex gap-3">
                  <div className="relative min-w-0 flex-1">
                    <BandPlot id="scale-high" title="band: [80-250] Hz" field={highBand} seed={47} scale={HIGH_SCALE} timeLabel selection />
                    <AxesToolbar />
                  </div>
                  <ScaleButtons name="80-250 Hz" />
                </div>
              </div>
            </div>
            <div className="pointer-events-none absolute inset-0 bg-[linear-gradient(to_bottom,transparent_58%,rgb(0_0_0/0.07)_69%,rgb(0_0_0/0.15)_76%,rgb(0_0_0/0.2)_84%,rgb(0_0_0/0.26)_91%,rgb(0_0_0/0.3)_98%,rgb(0_0_0/0.38)_100%)]" />
          </div>
          <h2 className="absolute inset-x-0 top-[110px] text-center font-['Inter'] text-[70px] leading-[84px] font-semibold text-black">
            Explore the data in detail
          </h2>
        </div>
        <div className="w-[430px] shrink-0" />
        <PlayerControls />
      </main>
    </div>
  );
}
